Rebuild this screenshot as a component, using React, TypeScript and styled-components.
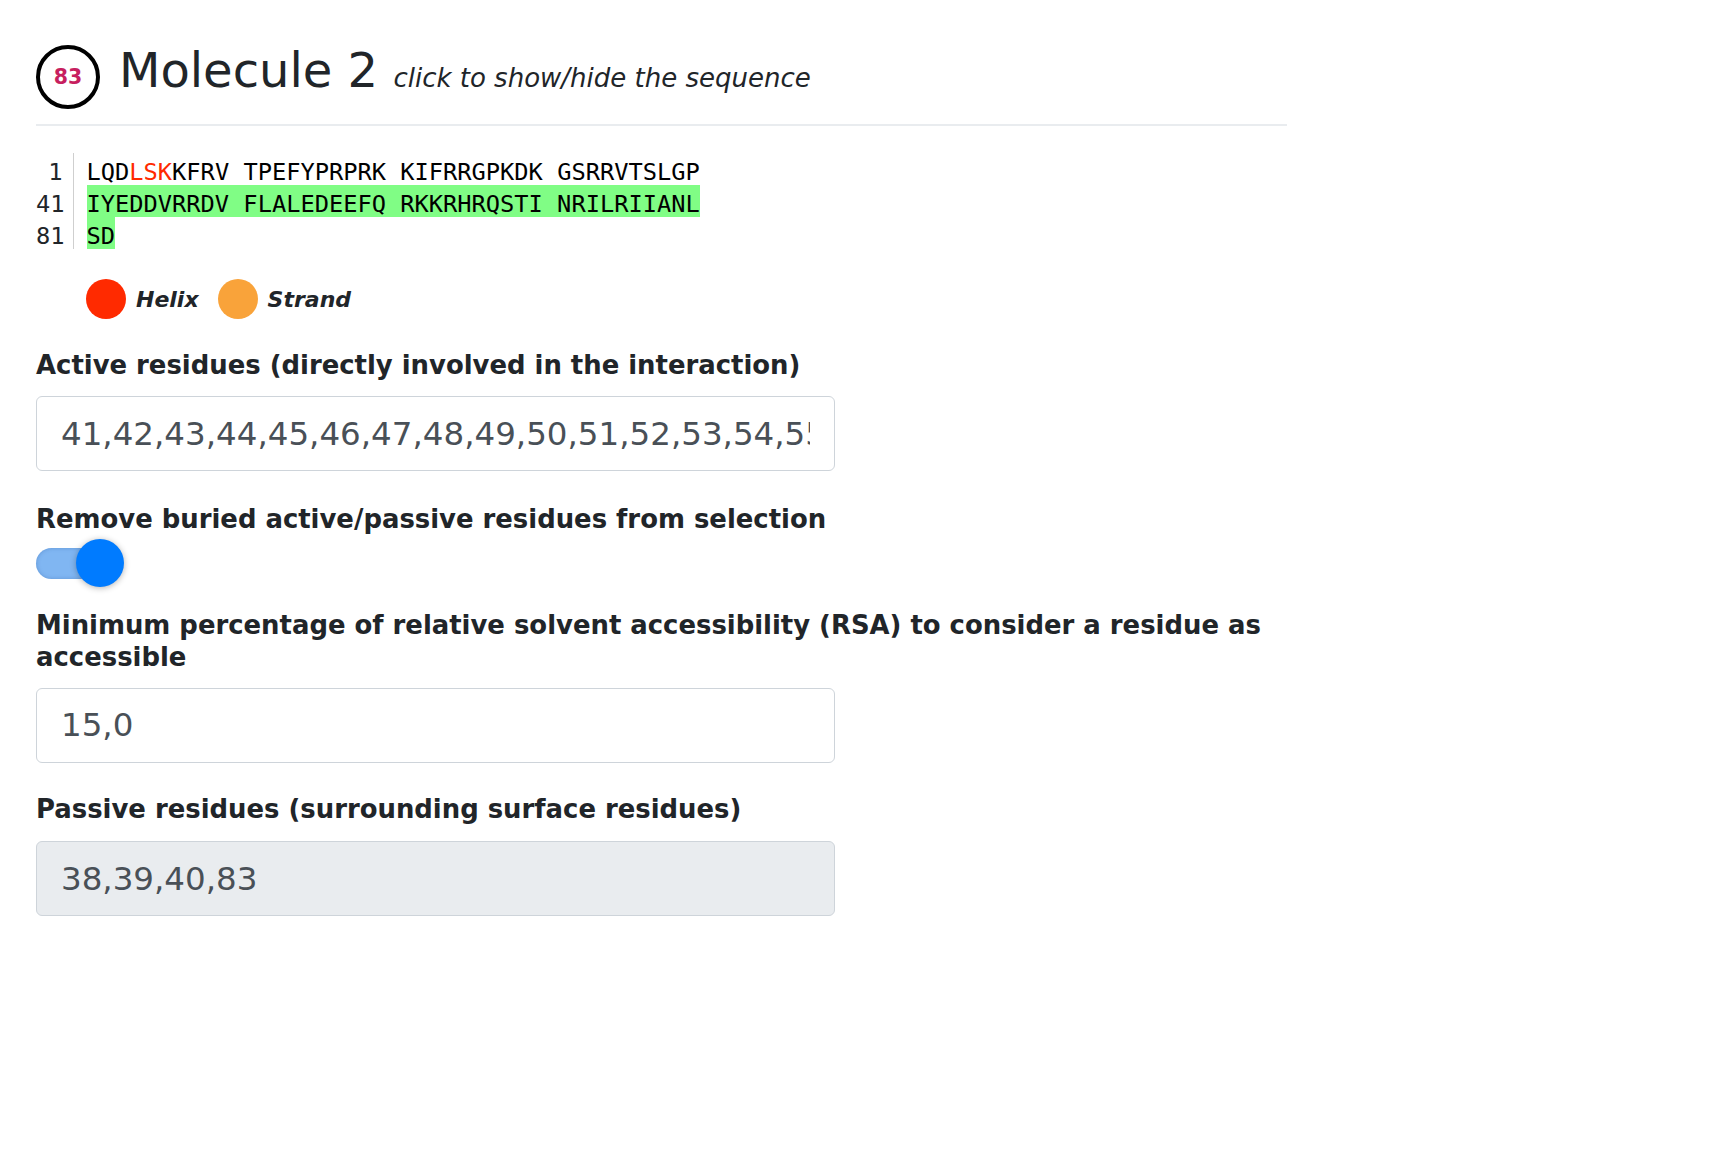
import React from "react";
import styled, { createGlobalStyle } from "styled-components";

const GlobalStyle = createGlobalStyle`
  html, body { margin: 0; padding: 0; background: #fff; }
  body { font-family: "DejaVu Sans", Verdana, sans-serif; color: #212529; }
  * { box-sizing: border-box; }
`;

const Page = styled.div`
  width: 1287px;
  padding: 42px 0 60px 36px;
`;

const Header = styled.div`
  display: flex;
  align-items: flex-start;
  cursor: pointer;
`;

const Badge = styled.div`
  width: 64px;
  height: 64px;
  flex: 0 0 64px;
  border: 4px solid #000;
  border-radius: 50%;
  display: flex;
  align-items: center;
  justify-content: center;
  margin-top: 3px;
  margin-right: 19px;
  font-weight: bold;
  font-size: 20.5px;
  color: #c71f5f;
`;

const Title = styled.h1`
  margin: 0;
  font-size: 48px;
  font-weight: 400;
  line-height: 56px;
  white-space: nowrap;
`;

const Hint = styled.small`
  font-size: 26px;
  font-style: italic;
  font-weight: 400;
`;

const Divider = styled.hr`
  margin: 15px 0 0;
  border: 0;
  height: 2px;
  background: #e9ecef;
`;

const Sequence = styled.div`
  margin-top: 27px;
  font-family: "DejaVu Sans Mono", monospace;
  font-size: 23.7px;
`;

const SeqRow = styled.div`
  display: flex;
  height: 32px;
`;

const LineNo = styled.div`
  width: 38px;
  padding: 6px 10.5px 0 0;
  line-height: 26px;
  text-align: right;
  border-right: 1px solid #cfcfcf;
`;

const SeqCell = styled.div`
  padding-left: 12.5px;
`;

const Residues = styled.span<{ $active?: boolean }>`
  display: inline-block;
  height: 32px;
  padding-top: 6px;
  line-height: 26px;
  white-space: pre;
  background: ${(p) => (p.$active ? "#80fd85" : "transparent")};
  color: #000;
`;

const HelixRes = styled.span`
  color: #ff2a00;
`;

const Legend = styled.div`
  display: flex;
  align-items: center;
  height: 40px;
  margin: 30px 0 0 50px;
`;

const Dot = styled.span<{ $color: string }>`
  width: 40px;
  height: 40px;
  border-radius: 50%;
  background: ${(p) => p.$color};
  margin-right: 10px;
`;

const LegendLabel = styled.span`
  font-weight: bold;
  font-style: italic;
  font-size: 22px;
  margin-right: 19px;
`;

const Field = styled.div<{ $mt: number }>`
  margin-top: ${(p) => p.$mt}px;
`;

const Label = styled.label<{ $mb?: number }>`
  display: block;
  font-size: 25.9px;
  font-weight: bold;
  line-height: 31.2px;
  margin-bottom: ${(p) => (p.$mb ?? 16)}px;
`;

const TextInput = styled.input<{ $readonly?: boolean }>`
  display: block;
  width: 799px;
  height: 75px;
  padding: 0 24px;
  border: 1px solid #ced4da;
  border-radius: 6px;
  font-family: "DejaVu Sans", Verdana, sans-serif;
  font-size: 32.5px;
  color: #495057;
  background: ${(p) => (p.$readonly ? "#e9ecef" : "#fff")};
  outline: none;
`;

const Switch = styled.div`
  display: flex;
  align-items: center;
  height: 48px;
`;

const Track = styled.div`
  width: 60px;
  height: 31px;
  border-radius: 16px;
  background: #80b6f2;
  box-shadow: inset 0 0 4px rgba(40, 90, 160, 0.35);
`;

const Knob = styled.div`
  width: 48px;
  height: 48px;
  margin-left: -20px;
  border-radius: 50%;
  background: #007bff;
  box-shadow: 0 1px 6px rgba(0, 0, 0, 0.3);
`;

const activeList = Array.from({ length: 42 }, (_, i) => i + 41).join(",");

export default function App() {
  return (
    <>
      <GlobalStyle />
      <Page>
        <Header>
          <Badge>83</Badge>
          <Title>
            Molecule 2 <Hint>click to show/hide the sequence</Hint>
          </Title>
        </Header>
        <Divider />

        <Sequence>
          <SeqRow>
            <LineNo>1</LineNo>
            <SeqCell>
              <Residues>
                LQD<HelixRes>LSK</HelixRes>KFRV TPEFYPRPRK KIFRRGPKDK GSRRVTSLGP
              </Residues>
            </SeqCell>
          </SeqRow>
          <SeqRow>
            <LineNo>41</LineNo>
            <SeqCell>
              <Residues $active>IYEDDVRRDV FLALEDEEFQ RKKRHRQSTI NRILRIIANL</Residues>
            </SeqCell>
          </SeqRow>
          <SeqRow>
            <LineNo>81</LineNo>
            <SeqCell>
              <Residues $active>SD</Residues>
            </SeqCell>
          </SeqRow>
        </Sequence>

        <Legend>
          <Dot $color="#ff2a00" />
          <LegendLabel>Helix</LegendLabel>
          <Dot $color="#f9a33a" />
          <LegendLabel>Strand</LegendLabel>
        </Legend>

        <Field $mt={31}>
          <Label $mb={15}>Active residues (directly involved in the interaction)</Label>
          <TextInput type="text" defaultValue={activeList} />
        </Field>

        <Field $mt={33}>
          <Label $mb={4}>Remove buried active/passive residues from selection</Label>
          <Switch>
            <Track />
            <Knob />
          </Switch>
        </Field>

        <Field $mt={23}>
          <Label $mb={15}>
            Minimum percentage of relative solvent accessibility (RSA) to consider a residue as
            accessible
          </Label>
          <TextInput type="text" defaultValue="15,0" />
        </Field>

        <Field $mt={31}>
          <Label $mb={16}>Passive residues (surrounding surface residues)</Label>
          <TextInput type="text" $readonly readOnly defaultValue="38,39,40,83" />
        </Field>
      </Page>
    </>
  );
}
